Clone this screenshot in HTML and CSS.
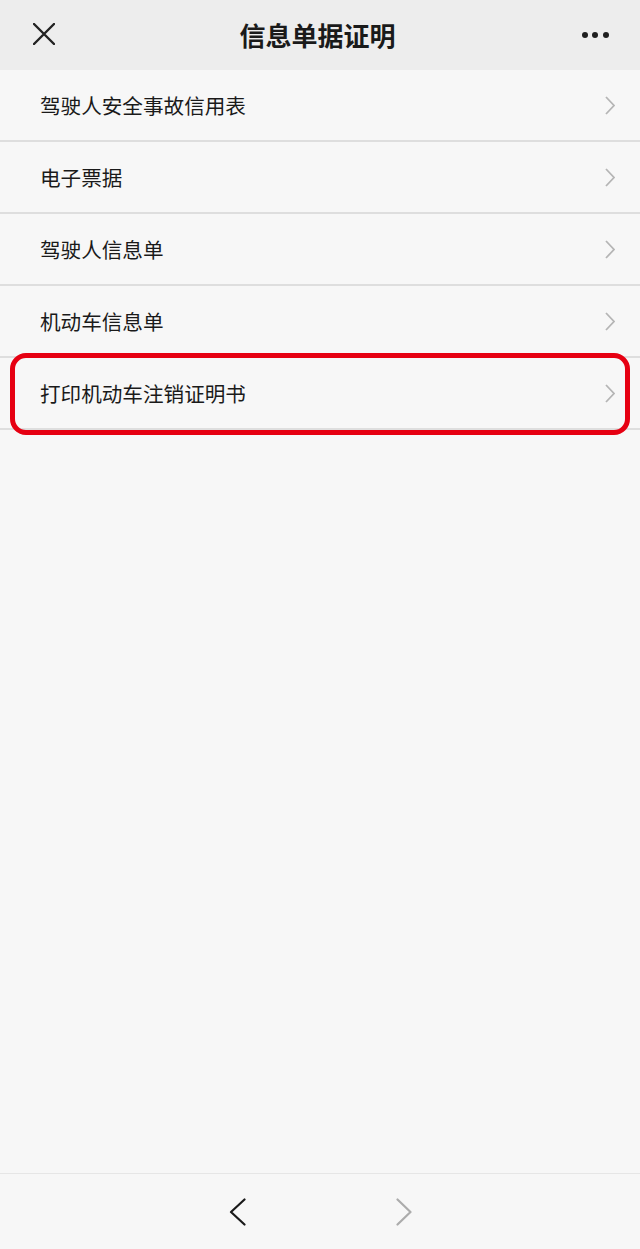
FILE: index.html
```html
<!DOCTYPE html>
<html lang="zh-CN">
<head>
<meta charset="utf-8">
<title>信息单据证明</title>
<link rel="stylesheet" href="styles.css">
</head>
<body>
<div class="page">
  <header class="nav">
    <span class="nav-close">
      <svg width="22" height="22" viewBox="0 0 22 22"><path d="M1 1 L21 21 M21 1 L1 21" stroke="#222" stroke-width="2.4" fill="none" stroke-linecap="round"/></svg>
    </span>
    <h1 class="nav-title">信息单据证明</h1>
    <span class="nav-more"><i></i><i></i><i></i></span>
  </header>
  <ul class="list">
    <li class="row"><span class="row-text">驾驶人安全事故信用表</span><svg class="chev" width="10" height="19" viewBox="0 0 10 19"><path d="M1 1 L9 9.5 L1 18" stroke="#b5b5b5" stroke-width="1.8" fill="none"/></svg></li>
    <li class="row"><span class="row-text">电子票据</span><svg class="chev" width="10" height="19" viewBox="0 0 10 19"><path d="M1 1 L9 9.5 L1 18" stroke="#b5b5b5" stroke-width="1.8" fill="none"/></svg></li>
    <li class="row"><span class="row-text">驾驶人信息单</span><svg class="chev" width="10" height="19" viewBox="0 0 10 19"><path d="M1 1 L9 9.5 L1 18" stroke="#b5b5b5" stroke-width="1.8" fill="none"/></svg></li>
    <li class="row"><span class="row-text">机动车信息单</span><svg class="chev" width="10" height="19" viewBox="0 0 10 19"><path d="M1 1 L9 9.5 L1 18" stroke="#b5b5b5" stroke-width="1.8" fill="none"/></svg></li>
    <li class="row row-marked"><span class="row-text">打印机动车注销证明书</span><svg class="chev" width="10" height="19" viewBox="0 0 10 19"><path d="M1 1 L9 9.5 L1 18" stroke="#b5b5b5" stroke-width="1.8" fill="none"/></svg><span class="highlight"></span></li>
  </ul>
  <div class="spacer"></div>
  <footer class="toolbar">
    <svg width="17" height="28" viewBox="0 0 17 28"><path d="M15.5 1.5 L2 14 L15.5 26.5" stroke="#1a1a1a" stroke-width="2.2" fill="none" stroke-linecap="round" stroke-linejoin="round"/></svg>
    <svg width="16" height="28" viewBox="0 0 16 28"><path d="M1.5 1.5 L14.5 14 L1.5 26.5" stroke="#acacac" stroke-width="2.2" fill="none" stroke-linecap="round" stroke-linejoin="round"/></svg>
  </footer>
</div>
</body>
</html>
```
FILE: styles.css
```css
* { box-sizing: border-box; }
html, body { margin: 0; padding: 0; }
body {
  background: #f7f7f7;
  font-family: "Noto Sans CJK SC", "Noto Sans", sans-serif;
  color: #1a1a1a;
}
.page {
  width: 640px;
  height: 1249px;
  display: flex;
  flex-direction: column;
  background: #f7f7f7;
}
.nav {
  height: 70px;
  flex: none;
  background: #ededed;
  display: flex;
  align-items: center;
  justify-content: space-between;
  padding: 0 31px 0 33px;
}
.nav-close { width: 22px; height: 22px; display: flex; margin-top: -2px; }
.nav-title {
  margin: 0;
  font-size: 26px;
  font-weight: 700;
  color: #1a1a1a;
  line-height: 1;
  margin-right: 2px;
}
.nav-more {
  width: 27px;
  display: flex;
  justify-content: space-between;
  align-items: center;
}
.nav-more i {
  width: 6px;
  height: 6px;
  border-radius: 50%;
  background: #1f1f1f;
  display: block;
}
.list {
  list-style: none;
  margin: 0;
  padding: 0;
}
.row {
  position: relative;
  height: 72px;
  border-bottom: 2px solid #dedede;
  display: flex;
  align-items: center;
  justify-content: space-between;
  padding: 0 25px 0 40px;
}
.row-text {
  font-size: 20.6px;
  color: #1a1a1a;
  line-height: 1;
}
.chev { flex: none; }
.highlight {
  position: absolute;
  left: 10px;
  right: 10px;
  top: -5px;
  bottom: -7px;
  border: 5px solid #e60012;
  border-radius: 16px;
  pointer-events: none;
}
.spacer { flex: 1; }
.toolbar {
  height: 76px;
  flex: none;
  border-top: 1px solid #e6e6e6;
  background: #f7f7f7;
  display: flex;
  align-items: center;
  justify-content: center;
  gap: 150px;
}
```
